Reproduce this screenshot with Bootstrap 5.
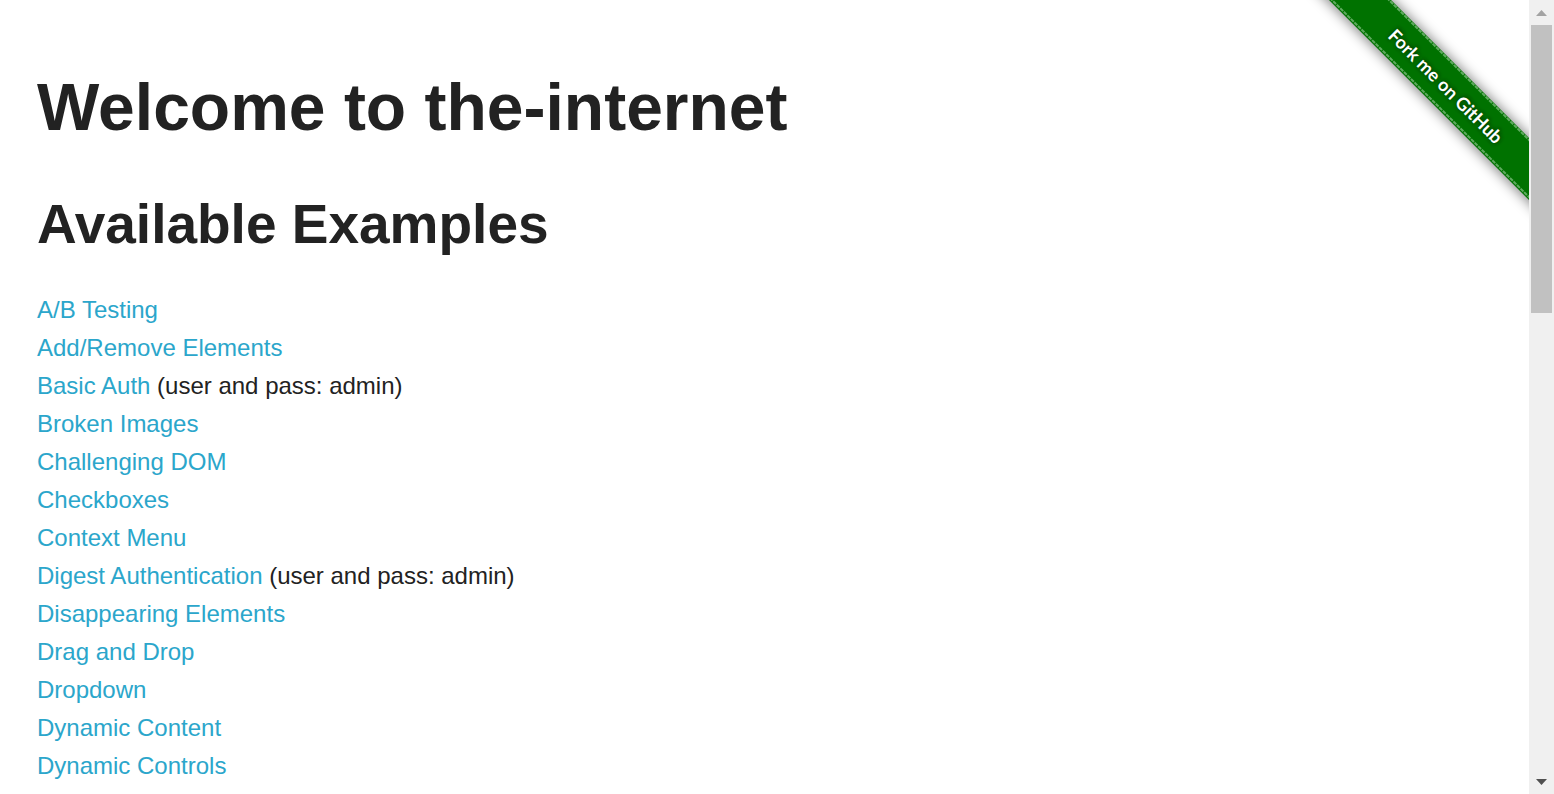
<!DOCTYPE html>
<html lang="en">
<head>
<meta charset="utf-8">
<meta name="viewport" content="width=device-width, initial-scale=1">
<title>The Internet</title>
<link href="https://cdn.jsdelivr.net/npm/bootstrap@5.3.0/dist/css/bootstrap.min.css" rel="stylesheet">
<style>
  body { font-family: "Liberation Sans", Arial, sans-serif; font-size: 24px; line-height: 38px; color: #222; }
  h1, h2 { font-weight: 700; line-height: 1.4; }
  h1 { font-size: 66px; margin: 61px 0 33px; }
  h2 { font-size: 55px; margin: 0 0 28px; }
  .page-content { padding: 0 37px; }
  .page-content a { color: #2ba6cb; text-decoration: none; }
  .ribbon { width: 224px; height: 224px; }
  .ribbon svg { display: block; }
  .scroll-track { width: 25px; background: #f0f0f0; padding: 0 2px; }
  .scroll-arrow { height: 25px; }
  .scroll-thumb { height: 36.3%; background: #c1c1c1; }
</style>
</head>
<body>
<div class="d-flex vh-100 overflow-hidden">
  <div class="position-relative flex-grow-1 overflow-hidden">
    <a class="ribbon position-absolute top-0 end-0" href="https://github.com/tourdedave/the-internet" aria-label="Fork me on GitHub">
      <svg width="224" height="224" viewBox="0 0 224 224">
        <defs>
          <filter id="shade" x="-20%" y="-20%" width="140%" height="140%"><feGaussianBlur stdDeviation="7"/></filter>
          <filter id="glow" x="-20%" y="-50%" width="140%" height="200%"><feGaussianBlur stdDeviation="2"/></filter>
        </defs>
        <path d="M-17-40H46L264 178V241Z" fill="#000" opacity=".55" filter="url(#shade)"/>
        <path d="M4-20H66L244 158V220Z" fill="#007200"/>
        <path d="M64-20L244 160M7-20L244 217" fill="none" stroke="#5fab5f" stroke-width="2" stroke-dasharray="4 1"/>
        <g transform="translate(141 86) rotate(45)" font-family="Lato, sans-serif" font-size="18" font-weight="700" text-anchor="middle">
          <text y="7" fill="#002800" filter="url(#glow)" aria-hidden="true">Fork me on GitHub</text>
          <text y="7" fill="#fff">Fork me on GitHub</text>
        </g>
      </svg>
    </a>
    <main class="page-content">
      <h1>Welcome to the-internet</h1>
      <h2>Available Examples</h2>
      <ul class="list-unstyled mb-0">
        <li><a href="#">A/B Testing</a></li>
        <li><a href="#">Add/Remove Elements</a></li>
        <li><a href="#">Basic Auth</a> (user and pass: admin)</li>
        <li><a href="#">Broken Images</a></li>
        <li><a href="#">Challenging DOM</a></li>
        <li><a href="#">Checkboxes</a></li>
        <li><a href="#">Context Menu</a></li>
        <li><a href="#">Digest Authentication</a> (user and pass: admin)</li>
        <li><a href="#">Disappearing Elements</a></li>
        <li><a href="#">Drag and Drop</a></li>
        <li><a href="#">Dropdown</a></li>
        <li><a href="#">Dynamic Content</a></li>
        <li><a href="#">Dynamic Controls</a></li>
      </ul>
    </main>
  </div>
  <div class="scroll-track d-flex flex-column flex-shrink-0" aria-hidden="true">
    <div class="scroll-arrow d-flex align-items-center justify-content-center flex-shrink-0">
      <svg width="11" height="6" viewBox="0 0 11 6"><path d="M0 6L5.500 0L11 6Z" fill="#a3a3a3"/></svg>
    </div>
    <div class="scroll-thumb"></div>
    <div class="scroll-arrow d-flex align-items-center justify-content-center flex-shrink-0 mt-auto">
      <svg width="11" height="6" viewBox="0 0 11 6"><path d="M0 0L5.500 6L11 0Z" fill="#505050"/></svg>
    </div>
  </div>
</div>
<script src="https://cdn.jsdelivr.net/npm/bootstrap@5.3.0/dist/js/bootstrap.bundle.min.js"></script>
</body>
</html>
